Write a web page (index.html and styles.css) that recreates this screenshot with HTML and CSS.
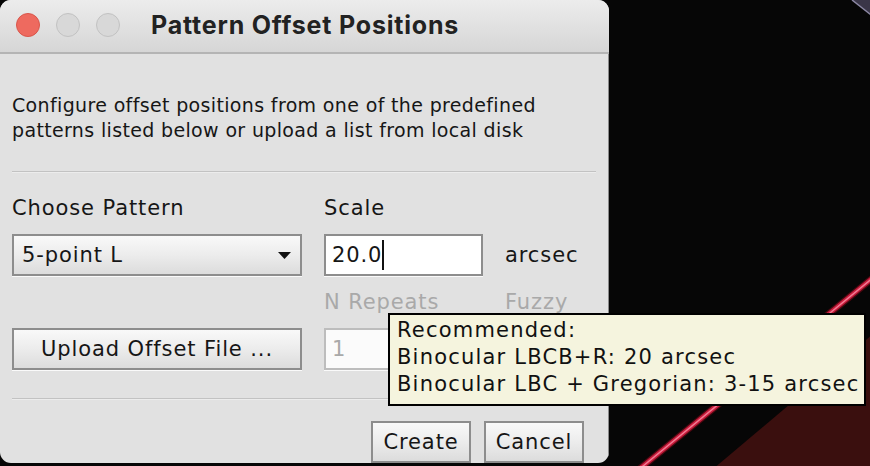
FILE: index.html
```html
<!DOCTYPE html>
<html>
	<head>
		<meta charset="UTF-8">
		<title>Pattern Offset Positions</title>
		<link rel="stylesheet" href="styles.css">
	</head>
	<body>
		<div class="desktop">
			<svg class="wallpaper" width="870" height="466" viewBox="0 0 870 466">
				<polygon points="700,480 880,328 880,480" fill="#3a0f0e"/>
				<polygon points="852,0 880,0 880,22" fill="#3a3648"/>
				<line x1="852" y1="0" x2="880" y2="22" stroke="#8c88a4" stroke-width="1.5"/>
				<line x1="626" y1="480" x2="880" y2="272" stroke="#4a0810" stroke-width="7"/>
				<line x1="626" y1="480" x2="880" y2="272" stroke="#c81c3c" stroke-width="4.5"/>
				<line x1="626" y1="480" x2="880" y2="272" stroke="#f27a92" stroke-width="1.5"/>
			</svg>
			<div class="window">
				<div class="titlebar">
					<div class="lights">
						<span class="light close"></span>
						<span class="light"></span>
						<span class="light"></span>
					</div>
					<div class="title">Pattern Offset Positions</div>
				</div>
				<div class="content">
					<p class="intro">Configure offset positions from one of the predefined<br>patterns listed below or upload a list from local disk</p>
					<div class="sep"></div>
					<div class="form">
						<div class="label">Choose Pattern</div>
						<div class="label">Scale</div>
						<div></div>

						<div class="combo">
							<span>5-point L</span>
							<svg width="13" height="7" viewBox="0 0 13 7"><path d="M0 0H13L6.5 7Z" fill="#111"/></svg>
						</div>
						<div class="field">20.0<span class="caret"></span></div>
						<div class="label">arcsec</div>

						<div></div>
						<div class="label off">N Repeats</div>
						<div class="label off">Fuzzy</div>

						<div class="btn wide">Upload Offset File ...</div>
						<div class="field off">1</div>
						<div></div>
					</div>
					<div class="sep"></div>
					<div class="actions">
						<div class="btn">Create</div>
						<div class="btn">Cancel</div>
					</div>
				</div>
			</div>
			<div class="tooltip">
				Recommended:<br>
				Binocular LBCB+R: 20 arcsec<br>
				Binocular LBC + Gregorian: 3-15 arcsec
			</div>
		</div>
	</body>
</html>
```

FILE: styles.css
```css
body{
	margin: 0;
	background: #060606;
	font-family: "DejaVu Sans", "Liberation Sans", sans-serif;
	color: #161616;
}
.desktop{
	position: relative;
	width: 870px;
	height: 466px;
	overflow: hidden;
	background: #060606;
}
.wallpaper{
	position: absolute;
	left: 0;
	top: 0;
}

/* dialog */
.window{
	position: absolute;
	left: 0;
	top: 0;
	width: 609px;
	height: 463px;
	border-radius: 11px;
	overflow: hidden;
	background: #e1e1e1;
	display: flex;
	flex-direction: column;
}
.titlebar{
	height: 52px;
	flex: none;
	display: flex;
	align-items: center;
	background: linear-gradient(#ececec, #d6d6d6);
	border-bottom: 2px solid #b4b4b4;
}
.lights{
	display: flex;
	gap: 16px;
	padding-left: 16px;
	margin-top: -2px;
}
.light{
	width: 22px;
	height: 22px;
	border-radius: 50%;
	background: #d8d8d8;
	border: 1px solid #c2c2c2;
}
.light.close{
	background: #ee6a5f;
	border-color: #d9564b;
}
.title{
	margin-left: 31px;
	margin-top: -3px;
	font-family: Inter, "Liberation Sans", sans-serif;
	font-weight: 700;
	font-size: 25px;
	letter-spacing: 0.8px;
	color: #222;
}
.content{
	flex: 1;
	padding: 0 12px;
	border-left: 2px solid #8a8a8a;
	border-right: 1px solid #8a8a8a;
	margin-left: -2px;
	font-size: 21px;
	letter-spacing: 0.9px;
}
.intro{
	margin: 39px 0 0;
	line-height: 25px;
	font-size: 19px;
	letter-spacing: 0.35px;
}
.sep{
	height: 1px;
	background: #c2c2c2;
	border-bottom: 1px solid #ececec;
	margin-top: 28px;
}

/* form grid */
.form{
	display: grid;
	grid-template-columns: 290px 159px auto;
	grid-template-rows: 24px 42px 24px 42px;
	column-gap: 22px;
	row-gap: 14px;
	margin-top: 23px;
	margin-bottom: 22px;
	align-items: center;
}
.label{
	white-space: nowrap;
}
.off{
	color: #a9a9a9;
}
.combo, .btn{
	box-sizing: border-box;
	height: 42px;
	display: flex;
	align-items: center;
	border: 2px solid #8d8d8d;
	background: linear-gradient(#f9f9f9, #ececec 50%, #dcdcdc);
	box-shadow: 0 1px 0 #fafafa;
	white-space: nowrap;
}
.combo{
	justify-content: space-between;
	padding: 0 9px 0 8px;
}
.field{
	box-sizing: border-box;
	height: 42px;
	display: flex;
	align-items: center;
	padding-left: 6px;
	background: #fff;
	border: 2px solid #8d8d8d;
	box-shadow: 0 1px 0 #fafafa;
}
.field.off{
	background: #fbfbfb;
	border-color: #bdbdbd;
}
.caret{
	width: 2px;
	height: 30px;
	background: #111;
}
.btn{
	justify-content: center;
}
.actions{
	display: flex;
	justify-content: flex-end;
	gap: 13px;
	padding-right: 12px;
	margin-top: 21px;
}
.actions .btn{
	width: 100px;
}

/* tooltip */
.tooltip{
	position: absolute;
	left: 388px;
	top: 313px;
	width: 467px;
	height: 87px;
	padding: 2px 0 0 7px;
	background: #f5f4de;
	border: 2px solid #000;
	font-size: 21px;
	letter-spacing: 1.2px;
	line-height: 27px;
	color: #111;
	white-space: nowrap;
}
```
